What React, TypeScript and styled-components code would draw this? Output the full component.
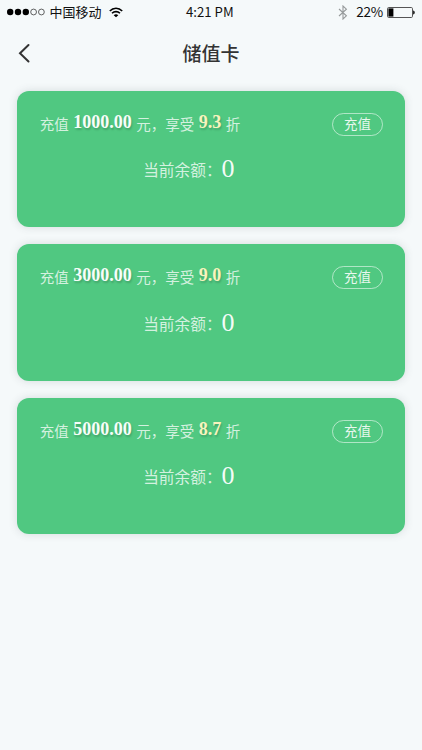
import React from "react";
import styled, { createGlobalStyle } from "styled-components";

const GlobalStyle = createGlobalStyle`
  * { box-sizing: border-box; }
  body {
    margin: 0;
    background: #f5f9fa;
    font-family: "Noto Sans CJK SC", "Noto Sans", sans-serif;
  }
`;

const Screen = styled.main`
  display: flex;
  flex-direction: column;
  min-height: 750px;
  background: #f5f9fa;
`;

const StatusBar = styled.div`
  display: grid;
  grid-template-columns: 179px auto 1fr;
  align-items: center;
  height: 24px;
  padding: 0 7px;
  color: #111;
  font-size: 13px;
  line-height: 23px;
`;

const StatusGroup = styled.div<{ $end?: boolean }>`
  display: flex;
  align-items: center;
  justify-content: ${(p) => (p.$end ? "flex-end" : "flex-start")};
  height: 24px;
`;

const DotsIcon = styled.svg`
  display: block;
  margin-right: 4.4px;
`;

const Carrier = styled.span`
  height: 24px;
  margin-right: 7.4px;
`;

const Clock = styled.span`
  height: 24px;
  font-size: 13.2px;
`;

const Battery = styled.span`
  height: 24px;
  margin: 0 4px 0 8px;
  font-size: 13.5px;
  letter-spacing: -0.2px;
`;

const NavBar = styled.header`
  display: grid;
  grid-template-columns: 48px 1fr 48px;
  align-items: center;
  height: 58px;
`;

const BackButton = styled.button`
  display: flex;
  align-items: center;
  height: 40px;
  padding: 0 0 0 18px;
  border: 0;
  background: none;
`;

const Title = styled.h1`
  margin: 0;
  color: #333;
  font-size: 19px;
  font-weight: 500;
  line-height: 28px;
  text-align: center;
`;

const CardList = styled.section`
  display: flex;
  flex-direction: column;
  gap: 17px;
  padding: 8.6px 17px;
`;

const Card = styled.article`
  height: 136.5px;
  padding: 22px 22px 0 22.8px;
  border-radius: 12px;
  background: #50c881;
  box-shadow: 0 0 8px rgba(60, 70, 80, 0.17);
  color: rgba(255, 255, 255, 0.77);
`;

const Offer = styled.div`
  display: flex;
  justify-content: space-between;
  height: 24px;
`;

const OfferText = styled.div`
  display: flex;
  gap: 4.5px;
  font-size: 14.5px;
  font-weight: 400;
  line-height: 22.4px;
  white-space: nowrap;
`;

const Figure = styled.b<{ $highlight?: boolean }>`
  margin-top: -2px;
  font-family: "Liberation Serif", "Times New Roman", serif;
  font-size: 18px;
  font-weight: 700;
  color: ${(p) => (p.$highlight ? "#f8f3bd" : "#f7fdf9")};
  text-shadow: 1px 2px 2px rgba(0, 0, 0, 0.18);
`;

const RechargeButton = styled.button`
  width: 51px;
  height: 23px;
  padding: 0;
  border: 1px solid rgba(255, 255, 255, 0.55);
  border-radius: 12px;
  background: none;
  color: rgba(255, 255, 255, 0.88);
  font: 400 13.5px/19px "Noto Sans CJK SC", sans-serif;

  span {
    display: block;
    height: 21px;
  }
`;

const Balance = styled.div`
  display: flex;
  justify-content: center;
  margin-top: 18.8px;
  padding-right: 45px;
  font-size: 15.7px;
  font-weight: 400;
  line-height: 30px;
`;

const Amount = styled.span`
  margin-top: -1px;
  font-family: "Liberation Serif", "Times New Roman", serif;
  font-size: 26px;
  font-weight: 400;
  color: rgba(255, 255, 255, 0.95);
`;

const plans = [
  { price: "1000.00", discount: "9.3", balance: 0 },
  { price: "3000.00", discount: "9.0", balance: 0 },
  { price: "5000.00", discount: "8.7", balance: 0 },
];

const SignalDots = () => (
  <DotsIcon width="38" height="8" viewBox="0 0 38 8">
    {[0, 1, 2, 3, 4].map((n) => (
      <circle
        key={n}
        cx={3.2 + n * 7.8}
        cy="4"
        r={n < 3 ? 3.2 : 2.9}
        fill={n < 3 ? "#000" : "none"}
        stroke={n < 3 ? "none" : "#222"}
        strokeWidth="0.7"
      />
    ))}
  </DotsIcon>
);

const WifiIcon = () => (
  <svg width="14" height="11" viewBox="0 0 14 11" fill="none" stroke="#000" strokeWidth="1.6">
    <path d="M.8 4C4.3.3 9.7.3 13.2 4M3 6.3c2.3-2.3 5.7-2.3 8 0" />
    <path d="M4.7 8.2c1.3-1.2 3.3-1.2 4.6 0L7 10.3Z" fill="#000" stroke="none" />
  </svg>
);

const BluetoothIcon = () => (
  <svg width="10" height="15" viewBox="0 0 10 15" fill="none" stroke="#969a9b" strokeWidth="1.1">
    <path d="m1 4 7.4 6.8L5 14V1l3.4 3.2L1 11" />
  </svg>
);

const BatteryIcon = () => (
  <svg width="28" height="11" viewBox="0 0 28 11">
    <rect x=".5" y=".5" width="25" height="10" rx="1.2" fill="none" stroke="#555" />
    <rect x="1.4" y="1.4" width="5" height="8.2" fill="#000" />
    <path d="M26.2 3.5c2 .6 2 3.4 0 4Z" fill="#000" />
  </svg>
);

export default function App() {
  return (
    <Screen>
      <GlobalStyle />
      <StatusBar>
        <StatusGroup>
          <SignalDots />
          <Carrier>中国移动</Carrier>
          <WifiIcon />
        </StatusGroup>
        <Clock>4:21 PM</Clock>
        <StatusGroup $end>
          <BluetoothIcon />
          <Battery>22%</Battery>
          <BatteryIcon />
        </StatusGroup>
      </StatusBar>
      <NavBar>
        <BackButton aria-label="返回">
          <svg width="12" height="20" viewBox="0 0 12 20" fill="none" stroke="#333" strokeWidth="2" strokeLinecap="round">
            <path d="M10.5 2 2 10.2l8.5 8.3" />
          </svg>
        </BackButton>
        <Title>储值卡</Title>
      </NavBar>
      <CardList>
        {plans.map((plan) => (
          <Card key={plan.price}>
            <Offer>
              <OfferText>
                <span>充值</span>
                <Figure>{plan.price}</Figure>
                <span>元，享受</span>
                <Figure $highlight>{plan.discount}</Figure>
                <span>折</span>
              </OfferText>
              <RechargeButton>
                <span>充值</span>
              </RechargeButton>
            </Offer>
            <Balance>
              <span>当前余额：</span>
              <Amount>{plan.balance}</Amount>
            </Balance>
          </Card>
        ))}
      </CardList>
    </Screen>
  );
}
